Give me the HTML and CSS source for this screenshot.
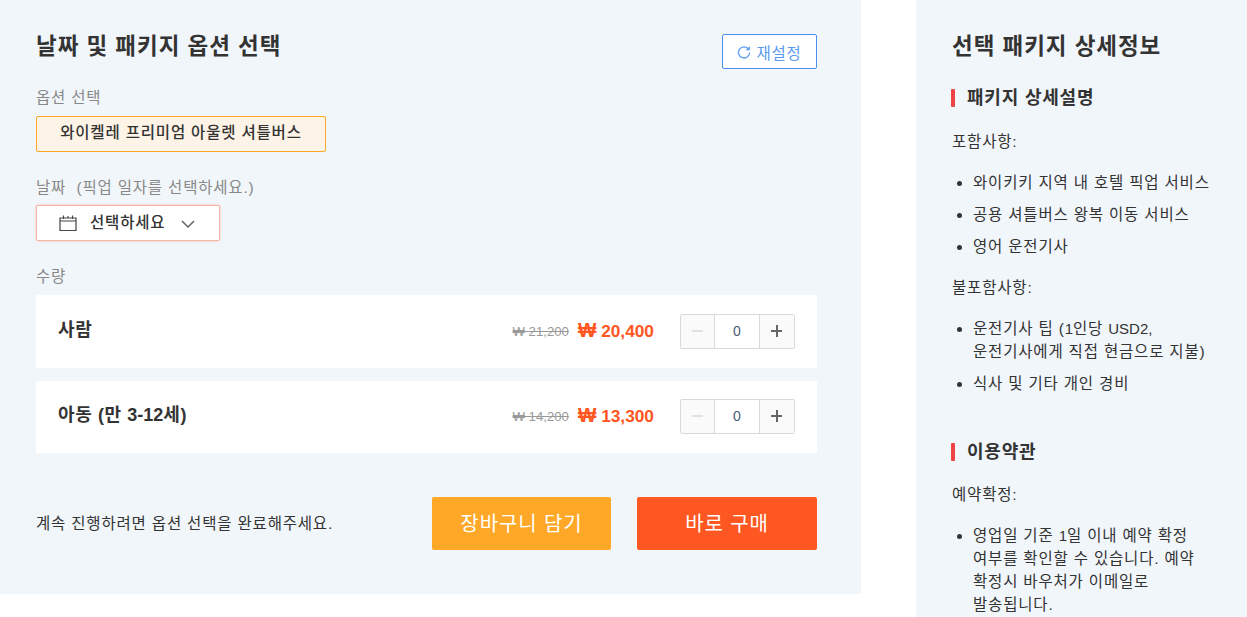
FILE: index.html
```html
<!DOCTYPE html>
<html lang="ko">
<head>
<meta charset="utf-8">
<title>패키지 옵션 선택</title>
<link rel="stylesheet" href="styles.css">
</head>
<body>
<div class="page">
  <main class="left">
    <div class="head">
      <h2 class="title">날짜 및 패키지 옵션 선택</h2>
      <button class="reset">
        <svg class="reset-icon" viewBox="0 0 14 14" width="14" height="14"><path d="M11.6 4.2A5.6 5.6 0 1 0 12.6 7.4" fill="none" stroke="#5b9bf0" stroke-width="1.3"/><path d="M12.8 1V5.2H8.6z" fill="#5b9bf0"/></svg>
        <span>재설정</span>
      </button>
    </div>
    <div class="label first">옵션 선택</div>
    <div class="option">와이켈레 프리미엄 아울렛 셔틀버스</div>
    <div class="label second">날짜&nbsp; (픽업 일자를 선택하세요.)</div>
    <div class="date">
      <svg class="cal" viewBox="0 0 18 16" width="18" height="16"><path d="M1 3H17V15.5H1z M1 6H17" fill="none" stroke="#444" stroke-width="1.2"/><path d="M4.5 .5V4M9 1V3M13.5 .5V4" fill="none" stroke="#444" stroke-width="1.1"/></svg>
      <span class="date-text">선택하세요</span>
      <svg class="chev" viewBox="0 0 14 8" width="14" height="8"><path d="M1 1l6 6 6-6" fill="none" stroke="#666" stroke-width="1.5"/></svg>
    </div>
    <div class="label third">수량</div>
    <div class="row">
      <div class="name">사람</div>
      <div class="old">₩ 21,200</div>
      <div class="price"><span class="won">₩</span> 20,400</div>
      <div class="stepper">
        <span class="step minus"><i class="bar"></i></span>
        <span class="count">0</span>
        <span class="step plus"><i class="bar"></i><i class="bar vert"></i></span>
      </div>
    </div>
    <div class="row">
      <div class="name">아동 (만 <span class="lat">3-12</span>세)</div>
      <div class="old">₩ 14,200</div>
      <div class="price"><span class="won">₩</span> 13,300</div>
      <div class="stepper">
        <span class="step minus"><i class="bar"></i></span>
        <span class="count">0</span>
        <span class="step plus"><i class="bar"></i><i class="bar vert"></i></span>
      </div>
    </div>
    <div class="foot">
      <div class="notice">계속 진행하려면 옵션 선택을 완료해주세요.</div>
      <button class="btn cart">장바구니 담기</button>
      <button class="btn buy">바로 구매</button>
    </div>
  </main>
  <aside class="right">
    <h2 class="title">선택 패키지 상세정보</h2>
    <h3 class="sub">패키지 상세설명</h3>
    <p class="para">포함사항:</p>
    <ul class="list">
      <li>와이키키 지역 내 호텔 픽업 서비스</li>
      <li>공용 셔틀버스 왕복 이동 서비스</li>
      <li>영어 운전기사</li>
    </ul>
    <p class="para">불포함사항:</p>
    <ul class="list">
      <li>운전기사 팁 (<span class="lat">1</span>인당 <span class="lat">USD2,</span><br>운전기사에게 직접 현금으로 지불)</li>
      <li>식사 및 기타 개인 경비</li>
    </ul>
    <h3 class="sub terms">이용약관</h3>
    <p class="para">예약확정:</p>
    <ul class="list">
      <li>영업일 기준 <span class="lat">1</span>일 이내 예약 확정<br>여부를 확인할 수 있습니다. 예약<br>확정시 바우처가 이메일로<br>발송됩니다.</li>
    </ul>
  </aside>
</div>
</body>
</html>
```
FILE: styles.css
```css
* { box-sizing: border-box; }
html, body { margin: 0; height: 617px; overflow: hidden; background: #fff; }
body { font-family: "Liberation Sans", "Noto Sans CJK KR", sans-serif; color: #333; font-size: 15.5px; letter-spacing: .82px; }
.page { display: flex; align-items: flex-start; }
.left { width: 861px; height: 594px; background: #f1f6fb; padding: 29px 44px 0 36px; flex: none; }
.right { width: 331px; margin-left: 55px; height: 640px; background: #f1f6fb; padding: 29px 36px 0; flex: none; }
.head { display: flex; justify-content: space-between; align-items: flex-start; }
.title { margin: 0; font-size: 22.5px; line-height: 36px; font-weight: 700; letter-spacing: .95px; color: #333; }
.lat { letter-spacing: 0; font-size: 15px; }
.name .lat { font-size: 18px; }
.reset { width: 95px; height: 35px; margin-top: 5px; background: #fff; border: 1px solid #4a90f0; border-radius: 2px; color: #5b9bf0; font: 15.5px "Liberation Sans", "Noto Sans CJK KR", sans-serif; letter-spacing: .82px; display: flex; align-items: center; justify-content: center; gap: 5px; padding: 0; }
.label { font-size: 15.5px; line-height: 24px; color: #888; }
.label.first { margin-top: 17px; }
.label.second { margin-top: 24px; }
.label.third { margin-top: 24px; }
.option { width: 290px; height: 36px; margin-top: 6px; background: #fdf3e7; border: 1px solid #ffa726; border-radius: 2px; font-size: 15.5px; font-weight: 500; line-height: 32px; text-align: center; color: #333; }
.date { width: 184px; height: 36px; margin-top: 5px; background: #fff; border: 1px solid #f5b5a5; border-radius: 2px; box-shadow: 0 0 3px #f7c4b8; display: flex; align-items: center; padding-left: 22px; font-size: 15.5px; font-weight: 500; color: #333; }
.cal { margin-right: 13px; }
.date-text { margin-right: 16px; margin-top: -5px; }
.chev { margin-top: 2px; }
.row { height: 72.5px; margin-bottom: 13px; background: #fff; display: flex; align-items: center; padding: 0 22px; letter-spacing: 0; }
.label.third + .row { margin-top: 6px; }
.name { font-size: 18px; font-weight: 700; letter-spacing: .6px; color: #333; margin-right: auto; margin-top: -7px; }
.old { font-size: 13.2px; color: #999; text-decoration: line-through; margin-right: 9px; }
.price { font-size: 17.3px; font-weight: 700; color: #ff5722; margin-right: 26px; }
.won { font-size: 19.5px; line-height: 17px; }
.stepper { width: 115px; height: 35px; display: flex; border: 1px solid #d9d9d9; border-radius: 2px; background: #fff; }
.step { width: 33px; background: #fafafa; position: relative; flex: none; }
.step.plus { width: 34px; }
.count { flex: 1; text-align: center; line-height: 33px; font-size: 14px; color: #4a5a78; border-left: 1px solid #d9d9d9; border-right: 1px solid #d9d9d9; }
.bar { position: absolute; left: 11px; top: 15px; width: 11px; height: 2px; background: #666; }
.bar.vert { left: 15.5px; top: 10px; width: 2px; height: 12px; }
.minus .bar { background: #e2e2e2; }
.foot { display: flex; align-items: center; margin-top: 44px; }
.notice { font-size: 15.5px; color: #333; margin-right: auto; margin-top: -3px; }
.btn { height: 53px; border: 0; border-radius: 2px; color: #fff; font: 20px "Liberation Sans", "Noto Sans CJK KR", sans-serif; letter-spacing: .9px; padding: 0 0 2px; }
.cart { width: 179px; background: #ffa726; margin-right: 26px; }
.buy { width: 180px; background: #ff5722; }
.sub { position: relative; margin: 20px 0 0; padding-left: 15px; font-size: 18px; line-height: 26px; font-weight: 700; letter-spacing: .8px; color: #333; }
.sub::before { content: ""; position: absolute; left: -1px; top: 4px; width: 4px; height: 18px; background: #ef4444; border-radius: 1px; }
.sub.terms { margin-top: 44px; }
.sub.terms + .para { margin-top: 18px; }
.para { margin: 19px 0 0; font-size: 15.5px; line-height: 23px; color: #333; }
.list { margin: 18px 0 0; padding: 0 0 0 21px; font-size: 15.5px; line-height: 23px; }
.list li { margin-bottom: 9px; }
.list li:last-child { margin-bottom: 0; }
.list + .para { margin-top: 18px; }
```
